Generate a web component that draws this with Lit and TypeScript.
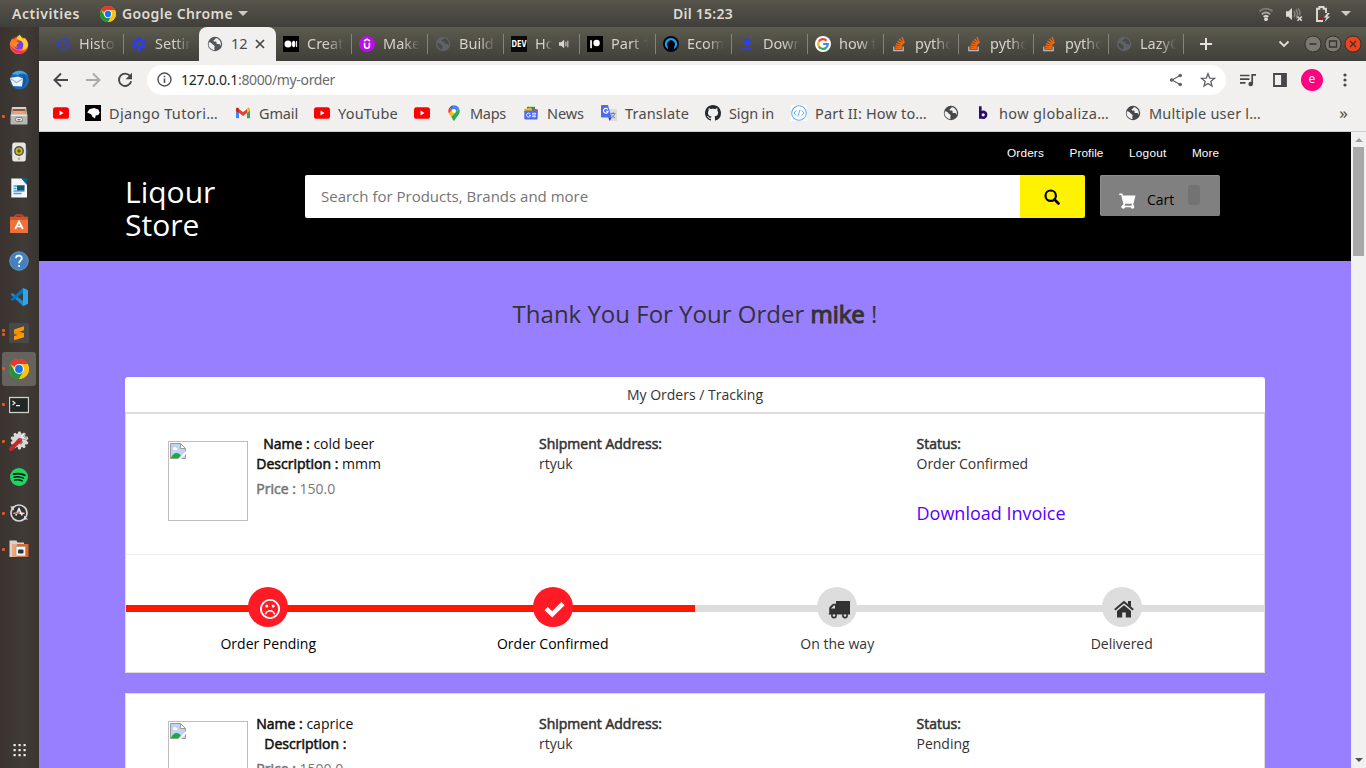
import { LitElement, html, svg, css, nothing } from "lit";
import { customElement } from "lit/decorators.js";

/* ---------- icon drawings ---------- */
const icon = (body: unknown, size = 16, box = "0 0 16 16") =>
  html`<svg class="ic" width=${size} height=${size} viewBox=${box}>${body}</svg>`;

const globeBody = (c: string) => svg`<circle cx="8" cy="8" r="7.2" fill=${c}/>
  <path d="M2.1 6.2c1.8.2 3 1 3.6 2.2.6 1 1.8.7 1.9 1.9.1 1-.5 1.4-.3 2.7.1.6.5 1 .9 1.1-3.400.3-6.600-2.500-6.600-5.800 0-.8.2-1.500.5-2.100z" fill="#f1f0ee"/>
  <path d="M9.400 2.300c-1.500.3-1.200 1.300-2.200 1.700-.9.300-.9 1.200 0 1.500 1.100.4 1.300-.3 2.100.3.700.6-.4 1.600.7 2.100 1.200.5 1.700-.4 2.500.2.700.5.500 1.500 1.300 1.600.7-3.800-1.500-6.700-4.400-7.400z" fill="#f1f0ee"/>`;
const globe = (c = "#45474a") => icon(globeBody(c));
const dimGlobe = icon(svg`<circle cx="8" cy="8" r="7.200" fill="#5f6368"/>
  <path d="M2.300 6.800c2 0 3 .8 3.500 1.600s1.800.7 1.900 1.900c.1 1-.6 1.400-.4 3.200-2.900-.5-5-2.900-5-6.700zM9.400 2.300c-1.500.3-1.200 1.300-2.200 1.700-.9.300-.9 1.200 0 1.500 1.100.4 1.300-.3 2.100.3.700.6-.4 1.600.7 2.100 1.200.5 1.700-.4 2.500.2.700.5.500 1.500 1.300 1.600.7-3.800-1.500-6.700-4.400-7.400z" fill="#4b4b45"/>`);
const chrome = (s: number) => icon(svg`<circle cx="12" cy="12" r="12" fill="#fbc116"/>
  <path d="M12 12 1.600 6A12 12 0 0 1 22.400 6z" fill="#e33b2e"/>
  <path d="M1.600 6A12 12 0 0 0 12 24l5.200-9-5.200-3-5.200 3z" fill="#229342"/>
  <path d="M12 24A12 12 0 0 0 22.400 6H12l5.200 9z" fill="#fbc116"/>
  <path d="M1.600 6A12 12 0 0 1 22.400 6H12v6z" fill="#e33b2e"/>
  <circle cx="12" cy="12" r="5.900" fill="#fff"/><circle cx="12" cy="12" r="4.700" fill="#1a73e8"/>`, s, "0 0 24 24");
const youtube = icon(svg`<rect y="2.200" width="16" height="11.600" rx="2.600" fill="#f00"/><path d="m6.500 5.600 4 2.400-4 2.400z" fill="#fff"/>`);
const history = icon(svg`<g fill="none" stroke="#303fe0" stroke-width="1.400"><path d="M3.200 8.600A5.600 5.600 0 1 1 5 12.400"/><path d="M8.700 4.800v3.600l2.600 1.500"/></g><path d="M.3 7.700h5.800L3.200 10.800z" fill="#303fe0"/>`);
const gear = icon(svg`<g fill="#303fe0"><circle cx="8" cy="8" r="5"/>${[0, 60, 120].map(a => svg`<rect x="6.200" y="1.100" width="3.600" height="13.800" rx=".7" transform=${`rotate(${a} 8 8)`}/>`)}</g><circle cx="8" cy="8" r="2.300" fill="#50504a"/>`);
const medium = icon(svg`<rect width="16" height="16" fill="#000"/><circle cx="5" cy="8" r="3.500" fill="#fff"/><ellipse cx="10.700" cy="8" rx="1.700" ry="3.300" fill="#fff"/><rect x="13.100" y="5" width="1" height="6" fill="#fff"/>`);
const udemy = icon(svg`<circle cx="8" cy="8" r="8" fill="#b80fe8"/><path d="m5 5 3-1.900L11 5M5.600 6.800v3a2.400 2.400 0 0 0 4.800 0v-3" fill="none" stroke="#fff" stroke-width="1.600"/>`);
const devto = icon(svg`<rect width="16" height="16" fill="#0a0a0a"/><text x="8" y="11.200" text-anchor="middle" textLength="15" lengthAdjust="spacingAndGlyphs" font-family="DejaVu Sans" font-weight="700" font-size="8" fill="#fff">DEV</text>`);
const patreon = icon(svg`<rect width="16" height="16" fill="#000"/><rect x="3.200" y="4.200" width="1.700" height="8" fill="#fff"/><circle cx="9.600" cy="7" r="3.200" fill="#fff"/>`);
const ecom = icon(svg`<circle cx="8" cy="8" r="8" fill="#05060b"/><path d="M4.800 13.200a6.100 6.100 0 1 1 6.400 0v-2.600a3.900 3.900 0 1 0-6.400 0z" fill="#12a5f4"/><circle cx="8" cy="7.500" r="2.900" fill="#000"/>`);
const download = icon(svg`<path d="M5.900 2.200h4.200v3.900h2.600L8 10.800 3.300 6.100h2.600zM3.300 12h9.400v1.600H3.300z" fill="#303fe0"/>`);
const google = icon(svg`<circle cx="8" cy="8" r="8" fill="#fff"/><g fill="none" stroke-width="2.200"><path d="M11.500 4.700A4.800 4.800 0 0 0 3.900 5.500" stroke="#ea4335"/><path d="M3.900 5.500a4.800 4.800 0 0 0 0 5" stroke="#fbbc05"/><path d="M3.900 10.500a4.800 4.800 0 0 0 7.300 1.100" stroke="#34a853"/><path d="M11.200 11.600A4.800 4.800 0 0 0 12.800 8H8.200" stroke="#4285f4"/></g>`);
const stack = icon(svg`<path d="M2.800 10.500v4h9.400v-4" fill="none" stroke="#bcbbbb" stroke-width="1.300"/><g stroke="#f4670c" stroke-width="1.400"><path d="M4.300 12.300h6.500M4.400 10.200l6.400.6M5 7.700l6.200 1.700M6.300 5.200l5.500 3.200M8.400 2.900l4.100 4.800M11 1.200l2.300 5.700"/></g>`);
const gmail = icon(svg`<path d="M1 4v9.300h3V7l4 3 4-3v6.300h3V4z" fill="#fff"/><path d="M1 4.500v8.800h3V6.500z" fill="#4285f4"/><path d="M12 6.500v6.800h3V4.500z" fill="#34a853"/><path d="M12 4v4l3-2.300V4c0-1.300-1.600-1.900-2.500-1.100z" fill="#fbbc04"/><path d="M4 8V4l4 3 4-3v4l-4 3z" fill="#ea4335"/><path d="M1 4v1.700L4 8V4l-.5-.9C2.600 2.300 1 2.700 1 4z" fill="#c5221f"/>`);
const djan = icon(svg`<rect width="16" height="16" fill="#000"/><path d="M2.200 7.500 4.500 4.200 9 2.900l4.400 1.700 1.300 3.200-1.500 2.200-2.500.6-.7 3-2.800-2.200-.7-2z" fill="#fff"/>`);
const maps = icon(svg`<path d="M8 .3A5.700 5.700 0 0 0 3.500 2.500L6.200 4.800z" fill="#1a73e8"/><path d="M3.500 2.500a5.700 5.700 0 0 0-.6 6L6.200 5z" fill="#ea4335"/><path d="M2.900 8.500c.6 1.300 1.500 2.300 2.300 3.400l4.600-5.500-3.600-1.600z" fill="#fbbc04"/><path d="M5.200 11.900C6.700 13.700 7 15.700 8 15.700s1.300-2 2.800-3.800c1.400-1.800 2.900-3.500 2.900-6 0-1-.2-1.700-.6-2.500z" fill="#34a853"/><path d="M8 .3c2.200 0 4.100 1.200 5.100 3.100L9.700 7.200 6.200 4.800z" fill="#4285f4"/><circle cx="8" cy="5.900" r="2" fill="#fff"/>`);
const news = icon(svg`<path d="M4 1.800h8v5H4z" fill="#0f9d58"/><path d="m1 4 7-1.400L10 7H2z" fill="#fbbc04"/><path d="m10 3.500 5 1L14.500 8H9z" fill="#ea4335"/><rect x="1.300" y="5.500" width="13.400" height="9" rx="1" fill="#4e6af2"/><path d="M7.300 9A2 2 0 1 0 7.600 10.300H6" fill="none" stroke="#fff" stroke-width="1"/><path d="M9 8.300h4M9 10h4M9 11.700h4" stroke="#fff" stroke-width=".9"/>`);
const translate = icon(svg`<path d="M7 4h9v12H9z" fill="#dcdcdc"/><path d="M9.500 8.500h5M12 7v1.500M10.300 13c2-1.200 3-2.500 3.300-4.500M10.500 9.500c.7 1.700 2 2.700 3.500 3.500" stroke="#6a8a9c" fill="none"/><path d="M0 1c0-.6.400-1 1-1h6l3.500 12.500H1c-.6 0-1-.4-1-1z" fill="#4e6af2"/><path d="M7.300 12.500h3.200L8.700 16z" fill="#1a2cc9"/><path d="M6.800 4.300a2.400 2.400 0 1 0 .4 2H5.100" fill="none" stroke="#fff" stroke-width="1.100"/>`);
const github = icon(svg`<path fill="#24292f" d="M8 0C3.580 0 0 3.580 0 8c0 3.540 2.290 6.530 5.470 7.590.4.070.55-.17.55-.38 0-.19-.01-.82-.01-1.490-2.010.37-2.530-.49-2.690-.94-.09-.23-.48-.94-.82-1.130-.28-.15-.68-.52-.01-.53.63-.01 1.080.58 1.230.82.72 1.210 1.870.87 2.330.66.070-.52.28-.87.51-1.070-1.780-.2-3.640-.89-3.640-3.950 0-.87.31-1.590.82-2.150-.08-.2-.36-1.020.08-2.120 0 0 .67-.21 2.200.82.640-.18 1.320-.27 2-.27s1.360.09 2 .27c1.530-1.040 2.200-.82 2.200-.82.44 1.100.16 1.920.08 2.120.51.56.82 1.270.82 2.150 0 3.070-1.870 3.750-3.650 3.950.29.25.54.73.54 1.480 0 1.070-.01 1.930-.01 2.200 0 .21.15.46.55.38A8.010 8.010 0 0 0 16 8c0-4.420-3.580-8-8-8z"/>`);
const code = icon(svg`<rect width="16" height="16" fill="#fff"/><circle cx="8" cy="8" r="7.300" fill="none" stroke="#62b1f3" stroke-width="1.100"/><path d="M5.200 5.500 3 8l2.200 2.500M10.800 5.500 13 8l-2.200 2.500M9 4.800 7 11.200" fill="none" stroke="#62b1f3"/>`);
const bmark = icon(svg`<path d="M5.300 1.300v12.400M5.300 9.800a2.900 2.900 0 1 0 5.800 0 2.900 2.900 0 1 0-5.800 0" fill="none" stroke="#2b0a6b" stroke-width="2.600"/>`);
const speaker = icon(svg`<path d="M0 5h2.500L6 2v10L2.500 9H0z" fill="#d8d6cf"/><path d="M8 4.500v5M10.300 3.200v7.600" stroke="#d8d6cf" stroke-width="1.200"/>`, 12, "0 0 14 14");

const L = (body: unknown) => icon(body, 20, "0 0 20 20");
const dock = [
  { i: L(svg`<circle cx="10" cy="11" r="8.700" fill="#f4442e"/><path d="M11 .8c.3 2 2 2.500 2.700 4L16 4.300c1.800 2 3.200 4.500 3.200 7A9 9 0 0 1 10 20a9 9 0 0 1-9.200-9C.8 8 2 6 3.300 4.500L4.400 6 7.500 4.500C8.500 3 9.500 1.500 11 .8z" fill="#ff7a21"/><path d="M11 .8c.3 2 2 2.500 2.700 4L16 4.300c1.800 2 3.200 4.500 3.200 7-1 3-3 4.200-5.200 4.700 1-4-1-9-6.500-11.500C8.500 3 9.500 1.500 11 .8z" fill="#ffcf35"/><path d="M1 11c1 5 4 8 9 8.700 4 0 7-2 8.300-4.700-2 2-5 2.500-8 1.500C6 16 3 14 1 11z" fill="#f72d62"/><circle cx="9.800" cy="11" r="4.600" fill="#7540d9"/><path d="M4.400 7.500c3-.8 4.400 0 5.800 1.500L8 10.500c-1 1-.4 2.500 1 3-2.500.5-5-2-4.600-6z" fill="#ff8a1f"/>`) },
  { i: L(svg`<circle cx="10.500" cy="10" r="9.500" fill="#1669b8"/><path d="M3 4C8-1 16 0 19 6c-4-3-7-3-10-1z" fill="#48a4e8"/><path d="M.8 8 9 6.500l5 2-1 8-9-.5z" fill="#eef3f8"/><path d="m1.500 8.500 6 4 6-3.500" fill="none" stroke="#9db6cb" stroke-width="1.100"/><path d="M15 5c3 5 2 10-4 14.500 3-3 4-8 3-12z" fill="#0f559e"/>`) },
  { dots: 1, i: L(svg`<path d="M3 1h14l1 7H2z" fill="#d7d4cf"/><path d="M3.500 3h13v5h-13z" fill="#8d5639"/><path d="M4 5h12v4H4z" fill="#f0a070"/><rect x="1.500" y="8" width="17" height="10.500" rx="1" fill="#b9b7b3"/><rect x="2.200" y="8.600" width="15.600" height="1.200" fill="#eee"/><rect x="6.500" y="11.500" width="7" height="4" rx="1.800" fill="#eee" stroke="#777"/><path d="M8.500 13.700h3" stroke="#555" stroke-width="1.200"/>`) },
  { i: L(svg`<rect x=".8" y="4" width="18.400" height="12" rx="6" fill="#44525f"/><rect x="3.200" y=".5" width="13.600" height="19" rx="2.500" fill="#e6e6e4"/><circle cx="10" cy="9" r="4.900" fill="#4e4e49"/><circle cx="10" cy="9" r="3.500" fill="#cdbb20"/><circle cx="10" cy="9" r="1.700" fill="#5b5520"/><circle cx="10" cy="16.700" r="1.200" fill="#aaa"/>`) },
  { i: L(svg`<path d="M2.300.5H13l5 5.300V19.500H2.300z" fill="#f3f7fa"/><path d="M12 .3h6V7z" fill="#11618c"/><path d="M4.500 8h11M4.500 10.500h3M4.500 13h11M4.500 15.500h8" stroke="#47a4cf" stroke-width="1.400"/><rect x="8" y="7.500" width="7.500" height="5" fill="#1b526c"/>`) },
  { i: L(svg`<path d="M5.500 4c0-4 9-4 9 0" fill="none" stroke="#c2401f" stroke-width="2"/><path d="M1 4h18v15H1z" fill="#f0703a"/><path d="M1 2.700h18V6H1z" fill="#d9512a"/><path d="M6.200 15 10 7.500l3.800 7.500M7 12.500h6" fill="none" stroke="#fff" stroke-width="1.700"/>`) },
  { i: L(svg`<circle cx="10" cy="10" r="9.300" fill="#4481be" stroke="#6f9dc9" stroke-width=".8"/><path d="M7 7.300c.2-3.800 6-3.300 5.800 0-.2 2-2.700 2.200-2.700 5M10.100 14v2" fill="none" stroke="#fff" stroke-width="1.700"/>`) },
  { i: L(svg`<path d="m14 1 5 2.200v13.600L14 19 1.500 7.600l2-1.600L14 14z" fill="#168bd3"/><path d="m14 1-12.500 11.400 2 1.600L14 6z" fill="#0b72bd"/><path d="m14 1 5 2.200v13.600L14 19z" fill="#2ba6ef"/>`) },
  { dots: 2, i: L(svg`<rect width="20" height="20" rx="1" fill="#494949"/><path d="M15 3.300v4L9.500 9 5 10.700V6.600z" fill="#ff9800"/><path d="M5 7.200 15 10v4.100L5 11z" fill="#f08c00"/><path d="M15 10.200v4L5 17.200v-4.100z" fill="#ff9800"/>`) },
  { dots: 1, active: true, i: chrome(20) },
  { dots: 1, i: L(svg`<rect x=".5" y="2.500" width="19" height="15" fill="#222625" stroke="#cfcfca" stroke-width="1.300"/><path d="m3.500 6 2.500 2-2.500 2M7 10.700h4" fill="none" stroke="#e9e9e9" stroke-width="1.200"/>`) },
  { dots: 1, i: L(svg`<g fill="#d9d9d7"><circle cx="10.500" cy="9.500" r="7.200"/>${[0, 36, 72, 108, 144].map(a => svg`<rect x="9" y=".5" width="3" height="18" rx="1" transform=${`rotate(${a} 10.500 9.500)`}/>`)}</g><path d="m8.500 8.500 4.500 4" stroke="#777" stroke-width="3.500"/><path d="m2 18 9-9" stroke="#c8242b" stroke-width="4" stroke-linecap="round"/><path d="M10.500 9.500 13 7M12 4c1-2 3-2.500 4.500-1.500L14.500 5l1 1.500 2.500-1c0 2.500-2.500 3.500-5 2.500" fill="#f2f2f2" stroke="#888" stroke-width=".8"/>`) },
  { dots: 1, none: true, i: L(svg`<circle cx="10" cy="10" r="9" fill="#1ed760"/><g fill="none" stroke="#111" stroke-linecap="round"><path d="M4.600 7.200c4-1.100 8-.7 11.200 1" stroke-width="1.800"/><path d="M5 10.300c3.500-1 6.800-.5 9.500.9" stroke-width="1.500"/><path d="M5.500 13.100c3-.7 5.500-.4 7.900.9" stroke-width="1.300"/></g>`) },
  { dots: 1, i: L(svg`<circle cx="10" cy="10" r="8" fill="#333" stroke="#d8d8d6" stroke-width="1.700"/><path d="m6.800 12.500 3.200-6.700 3.200 6.700" fill="none" stroke="#eee" stroke-width="1.700"/><path d="M4.500 10.300h11" stroke="#e9e9e9" stroke-width="1.400"/><path d="M5.500 10.300h5" stroke="#e95420" stroke-width="1.400"/><path d="M1 3.500h4v4zM19 16.500h-4v-4z" fill="#ddd"/>`) },
  { dots: 1, i: L(svg`<path d="M.5 1.500h7l1 2H15V18H.5z" fill="#d8d3cf"/><path d="M3 5h16.500v13H3z" fill="#df672f"/><path d="M3 5h5v13H3z" fill="#f0a57c"/><rect x="7" y="7.500" width="9.500" height="9.500" fill="#f4f4f4" stroke="#999" stroke-width=".7"/><rect x="9" y="10.500" width="5.500" height="4" rx="1" fill="#333"/>`) },
] as { i: unknown; dots?: number; active?: boolean; none?: boolean }[];

/* ---------- data ---------- */
const tabs: { t: string; i: unknown; kind?: string; w?: number }[] = [
  { t: "History", i: history }, { t: "Settings", i: gear, w: 75 }, { t: "12", i: globe("#54565b"), kind: "on", w: 77 },
  { t: "Create", i: medium }, { t: "Make", i: udemy }, { t: "Build a", i: dimGlobe }, { t: "How", i: devto, kind: "audio" },
  { t: "Part 1", i: patreon }, { t: "Ecomm", i: ecom }, { t: "Downlo", i: download }, { t: "how to", i: google },
  { t: "python", i: stack, w: 75 }, { t: "python", i: stack, w: 75 }, { t: "python", i: stack, w: 75 }, { t: "LazyC", i: dimGlobe, w: 75 },
];
/* cell: full width of a bookmark; w: label width */
const marks = [
  { i: youtube, t: "", cell: 32, w: 0 },
  { i: djan, t: "Django Tutori…", cell: 150, w: 109 },
  { i: gmail, t: "Gmail", cell: 79, w: 39 },
  { i: youtube, t: "YouTube", cell: 100, w: 60 },
  { i: youtube, t: "", cell: 32, w: 0 },
  { i: maps, t: "Maps", cell: 77, w: 36 },
  { i: news, t: "News", cell: 78, w: 37 },
  { i: translate, t: "Translate", cell: 104, w: 64 },
  { i: github, t: "Sign in", cell: 86, w: 45 },
  { i: code, t: "Part II: How to…", cell: 152, w: 112 },
  { i: globe(), t: "", cell: 32, w: 0 },
  { i: bmark, t: "how globaliza…", cell: 150, w: 110 },
  { i: globe(), t: "Multiple user l…", cell: 160, w: 112 },
];
const orders = [
  { name: "cold beer", desc: "mmm", price: "150.0", status: "Order Confirmed", invoice: true, nameIn: 7, descIn: 0 },
  { name: "caprice", desc: "", price: "1500.0", status: "Pending", invoice: false, nameIn: 0, descIn: 8 },
];
const steps = [
  { t: "Order Pending", on: true, i: html`<svg width="20" height="20" viewBox="0 0 20 20"><circle cx="10" cy="10" r="9.100" fill="none" stroke="currentColor" stroke-width="1.900"/><circle cx="6.800" cy="7" r="1.500" fill="currentColor"/><circle cx="13.200" cy="7" r="1.500" fill="currentColor"/><path d="M5.600 14.700c1.600-4 7.200-4 8.800 0" fill="none" stroke="currentColor" stroke-width="1.600" stroke-linecap="round"/></svg>` },
  { t: "Order Confirmed", on: true, i: html`<svg width="21" height="17" viewBox="0 0 21 17"><path d="m2.200 7.700 6 5.700L19 2.700" fill="none" stroke="currentColor" stroke-width="4.600"/></svg>` },
  { t: "On the way", on: false, i: html`<svg width="22" height="19" viewBox="0 0 22 19"><path d="M8 1h14v13.500H1.200c-.9 0-.9-1.200 0-1.300V8.500c0-1 .3-1.500.9-2.100l2-2c.5-.5 1-.7 1.800-.7H8z" fill="currentColor"/><path d="M3 8.500 5.800 5.600H7v3z" fill="#ddd"/><circle cx="6" cy="15.500" r="2.900" fill="currentColor"/><circle cx="6" cy="15.500" r="1.300" fill="#ddd"/><circle cx="17" cy="15.500" r="2.900" fill="currentColor"/><circle cx="17" cy="15.500" r="1.300" fill="#ddd"/></svg>` },
  { t: "Delivered", on: false, i: html`<svg width="20" height="18" viewBox="0 0 20 18"><path d="M10 5.300 17 11v6.500h-5.200v-5H8.200v5H3V11z" fill="currentColor"/><path d="M.8 9.700 10 2.100l9.200 7.600" fill="none" stroke="currentColor" stroke-width="2"/><path d="M14 1h3v6l-3-2.500z" fill="currentColor"/></svg>` },
];
const broken = html`<svg width="16" height="16" viewBox="0 0 16 16"><path d="M.5.500h10l5 5v10H.5z" fill="#c3d1f5" stroke="#9a9a9a"/><path d="M3 6c0-2 3-2.600 3.500-1C8 5 8 7 6.500 7H3.500z" fill="#fff"/><path d="M1 15c2-5 7-7 10-2l-2 2z" fill="#11b23b"/><path d="M10.500.5v5h5z" fill="#fff" stroke="#9a9a9a"/><path d="m8 16 8-8v3l-5 5z" fill="#fff"/></svg>`;

@customElement("app-root")
export class AppRoot extends LitElement {
  static styles = css`
    :host { display: block; width: 1366px; height: 768px; overflow: hidden; font-family: "Open Sans", "Noto Sans", sans-serif; font-size: 14px; line-height: 20px; color: #333; }
    * { box-sizing: border-box; }
    svg { display: block; flex: none; }
    .desk { display: grid; grid-template: 27px 741px / 39px 1327px; height: 768px; }
    .fit { white-space: pre; }

    .top { grid-column: 1 / 3; display: grid; grid-template-columns: 673px auto 1fr; align-items: center; background: linear-gradient(#56544b, #403f3a); color: #dfdbd2; font: 600 14px/26px "Noto Sans", sans-serif; }
    .top-l { display: flex; align-items: center; padding-left: 12px; }
    .top-l .ic { margin: 0 6px 0 20px; }
    .caret { border: 5px solid transparent; border-top-color: #cfcbc3; border-bottom: 0; margin-left: 5px; }
    .top-r { display: flex; justify-content: flex-end; align-items: center; padding-right: 15px; }

    .dock { background: linear-gradient(90deg, #3a332f, #403b36 60%, #393430); display: flex; flex-direction: column; align-items: center; padding-right: 1px; }
    .app { width: 38px; height: 34px; margin-bottom: 2.100px; display: flex; align-items: center; justify-content: center; position: relative; }
    .app.on { background: #66635f; border-radius: 3px; width: 34px; }
    .pips { position: absolute; left: 2px; top: 0; bottom: 0; display: flex; flex-direction: column; justify-content: center; gap: 1px; }
    .app.on .pips { left: 0; }
    .pips i { width: 3px; height: 3px; border-radius: 1px; background: #e95420; }
    .grid9 { margin-top: auto; padding: 0 0 11px; }

    .win { display: grid; grid-template-rows: 34px 37px 34px 636px; background: #f1f0ee; font-family: "Noto Sans", sans-serif; overflow: hidden; }
    .tabs { display: flex; background: linear-gradient(#5c5b4f, #403f3a); padding-left: 9px; color: #d5d2ca; font-size: 14.500px; }
    .tab { width: 76px; display: flex; align-items: center; padding: 0 8px 0 7px; position: relative; }
    .tab::after { content: ""; position: absolute; right: 0; top: 7px; height: 20px; width: 1px; background: #84827a; }
    .tab .lab { margin-left: 8px; flex: 1; overflow: hidden; white-space: nowrap; padding-bottom: 2px; -webkit-mask-image: linear-gradient(90deg, #000 55%, transparent); mask-image: linear-gradient(90deg, #000 55%, transparent); }
    .tab.on { background: #f1f0ee; border-radius: 8px 8px 0 0; color: #4a4a4a; padding: 0 11px 0 8px; }
    .tab.on::after, .tab.pre::after { display: none; }
    .tab.on .lab { -webkit-mask-image: none; mask-image: none; }
    .tab.audio .lab { flex: 0 0 17px; margin-right: 7px; }
    .plus { margin: 10px 0 0 15px; }
    .wm { margin-left: auto; display: flex; align-items: center; padding-right: 4px; }

    .bar { display: flex; align-items: center; padding-left: 14px; }
    .omni { width: 1079px; height: 30px; background: #fff; border-radius: 15px; display: flex; align-items: center; padding: 0 10px; font: 14px/30px "Noto Sans", sans-serif; color: #6b6b6b; }
    .omni .u { margin-left: 9px; flex: 1; }
    .host { color: #222; }
    .me { width: 22px; height: 22px; border-radius: 50%; background: #ff007f; color: #fff; font-size: 12px; line-height: 20px; text-align: center; }
    .marks { display: flex; align-items: center; padding: 0 0 4px 14px; border-bottom: 1px solid #cfcecc; font-size: 14.500px; color: #4b4b4b; }
    .mark { display: flex; align-items: center; gap: 8px; }
    .more { margin-left: auto; padding-right: 18px; font-size: 17px; line-height: 16px; }

    .view { display: grid; grid-template-columns: 1312px 15px; font-family: "Open Sans", sans-serif; }
    .page { background: #977fff; height: 636px; overflow: hidden; }
    .sb { background: #f1f1f1; display: flex; flex-direction: column; align-items: center; }
    .thumb { width: 11px; height: 109px; background: #a8a8a8; }
    .tri { border: 4px solid transparent; border-bottom: 4px solid #9c9c9c; border-top: 0; margin: 6px 0 5px; }
    .tri.dn { border-top: 4px solid #505050; border-bottom: 0; margin: auto 0 6px; }

    .head { background: #000; height: 129px; padding: 13px 131px 0 86px; color: #fff; }
    .links { display: flex; justify-content: flex-end; padding-right: 1px; gap: 25.500px; font: 11.800px/16px "Liberation Sans", sans-serif; }
    .row { display: flex; margin-top: 14px; }
    .brand { width: 180px; font-size: 30px; line-height: 33px; margin: 0; font-weight: 400; }
    .find { width: 715px; height: 43px; background: #fff; border-radius: 2px 0 0 2px; padding-left: 16px; font-size: 15px; line-height: 43px; color: #757575; }
    .go { width: 65px; height: 43px; background: #fff200; border-radius: 0 2px 2px 0; display: grid; place-items: center; padding-right: 1px; }
    .cart { width: 120px; height: 41px; margin-left: 15px; background: #808080; border: 1px solid #8e8e8e; border-right-color: #808080; border-bottom-color: #808080; border-radius: 2px; display: flex; color: #000; padding: 17px 0 0 18px; }
    .cart span { margin: -3px 0 0 11px; }
    .badge { width: 12px; height: 20px; background: #737373; border-radius: 3px; margin: -8px 0 0 14px; }

    .thanks { text-align: center; font-size: 24px; line-height: 26px; padding-top: 40px; height: 116px; margin: 0; font-weight: 400; }
    .fb { -webkit-text-stroke: .55px currentColor; }
    .thanks .fb { -webkit-text-stroke-width: 1.100px; }
    .list { width: 1140px; margin: 0 auto; }
    .cap { height: 36px; background: #fff; border-bottom: 1px solid #ddd; border-radius: 3px 3px 0 0; text-align: center; line-height: 35px; }
    .card { height: 260px; background: #fff; border: 1px solid #ddd; margin-bottom: 20px; }
    .info { height: 141px; border-bottom: 1px solid #eee; padding: 20px 0 0 42px; display: flex; }
    .pic { width: 80px; height: 80px; border: 1px solid #bdbdbd; padding: 1px; margin: 7px 8px 0 0; }
    .prod { width: 283px; padding-left: .3px; color: #111; }
    .price { color: #777; margin-top: 5px; }
    .addr { width: 377.500px; }
    .inv { margin-top: 29px; font-size: 18px; color: #5a00ff; }
    .track { display: grid; grid-template-columns: repeat(4, 1fr); padding-top: 32px; background: linear-gradient(90deg, #ff1800 50%, #ddd 50%) 0 50px / 100% 7px no-repeat; }
    .step { display: flex; flex-direction: column; align-items: center; gap: 7px; color: #333; }
    .step.on { color: #000; }
    .dot { width: 40px; height: 40px; border-radius: 50%; background: #ddd; display: grid; place-items: center; padding: 4px 0 0 4px; color: #333; }
    .on .dot { background: #ff1a25; color: #fff; }
  `;

  /* Spreads each measured label over its nominal width. */
  protected firstUpdated() {
    this.renderRoot.querySelectorAll<HTMLElement>("[data-w]").forEach(el => {
      const want = Number(el.dataset.w);
      const n = (el.textContent ?? "").length;
      const have = el.getBoundingClientRect().width;
      if (n && want) el.style.letterSpacing = `${(want - have) / n}px`;
    });
  }

  private fit(t: string, w: number, cls = "") {
    return html`<span class="fit ${cls}" data-w=${w}>${t}</span>`;
  }

  private topBar() {
    return html`<div class="top">
      <div class="top-l">${this.fit("Activities", 68)}${chrome(16)}${this.fit("Google Chrome", 111)}<i class="caret"></i></div>
      ${this.fit("Dil 15:23", 60)}
      <div class="top-r">
        <svg width="16" height="16" viewBox="0 0 16 16"><g fill="none" stroke-width="1.800"><path d="M1.500 5.300c4-3.300 9-3.300 13 0" stroke="#7f7d76"/><path d="M3.800 8.200c2.700-2.200 5.700-2.200 8.400 0" stroke="#aaa7a0"/><path d="M5.600 10.700c1.600-1.200 3.200-1.200 4.800 0" stroke="#dfdbd2"/></g><circle cx="8" cy="13.200" r="1.900" fill="#dfdbd2"/></svg>
        <svg style="margin-left:11px" width="18" height="16" viewBox="0 0 18 16"><path d="M1 5.200h2.500L7 2v12l-3.500-3.300H1z" fill="#dfdbd2"/><path d="M9 5c1.300 2 1.300 4 0 6M11 3.500c2 3 2 6 0 9M13.300 2.300c1.700 2.500 1.900 5 1.500 7" fill="none" stroke="#8a8780" stroke-width="1.400"/><path d="m12.500 10.500 4.300 4.300m0-4.300-4.300 4.300" stroke="#dfdbd2" stroke-width="1.600"/></svg>
        <svg style="margin-left:12px" width="16" height="18" viewBox="0 0 16 18"><path d="M8 16H2V3.800h2.400V2h4.200v1.800H11V8" fill="none" stroke="#dfdbd2" stroke-width="1.900"/><path d="M4 12.500h3.500v2H4z" fill="#d00"/><path d="M12.500 8 8.800 12.500h2.700L9.500 17l5.500-5.500h-2.800l2.600-3.500z" fill="#dfdbd2"/></svg>
        <i class="caret" style="margin-left:10px"></i>
      </div>
    </div>`;
  }

  private dockBar() {
    return html`<div class="dock">${dock.map(a => html`<div class="app ${a.active ? "on" : ""}">
        ${a.dots && !a.none ? html`<span class="pips"><i></i>${a.dots > 1 ? html`<i></i>` : nothing}</span>` : nothing}${a.i}</div>`)}
      <svg class="grid9" width="13" height="24" viewBox="0 0 13 13">${[0, 5, 10].map(x => [0, 5, 10].map(y => svg`<rect x=${x + 0.5} y=${y} width="2.200" height="2.200" fill="#eee"/>`))}</svg>
    </div>`;
  }

  private chromeBars() {
    return html`
      <div class="tabs">
        ${tabs.map((t, k) => html`<div class="tab ${t.kind ?? ""} ${k === 1 ? "pre" : ""}" style="width:${t.w ?? 76}px">${t.i}<span class="lab">${t.t}</span>${t.kind === "on"
          ? html`<svg width="10" height="10" viewBox="0 0 10 10"><path d="m1 1 8 8M9 1 1 9" stroke="#444" stroke-width="1.700"/></svg>`
          : t.kind === "audio" ? speaker : nothing}</div>`)}
        <svg class="plus" width="14" height="14" viewBox="0 0 14 14"><path d="M7 1v12M1 7h12" stroke="#e6e3dc" stroke-width="2"/></svg>
        <div class="wm">
          <svg width="12" height="8" viewBox="0 0 12 8"><path d="m1.500 1.500 4.500 4.500 4.500-4.500" fill="none" stroke="#e0ddd6" stroke-width="1.900"/></svg>
          <svg style="margin-left:14px" width="58" height="18" viewBox="0 0 58 18"><g stroke="#33322e"><circle cx="9" cy="9" r="8" fill="#7b7971"/><circle cx="29" cy="9" r="8" fill="#7b7971"/><circle cx="49" cy="9" r="8" fill="#f1421b"/></g><path d="M5.500 9h7M25.500 6h7v6h-7zM46 6l6 6m0-6-6 6" fill="none" stroke="#35342f" stroke-width="1.300"/></svg>
        </div>
      </div>
      <div class="bar">
        <svg width="16" height="16" viewBox="0 0 16 16"><path d="M15 8H2M8 1.500 1.500 8 8 14.500" fill="none" stroke="#45474a" stroke-width="1.900"/></svg>
        <svg style="margin-left:16px" width="16" height="16" viewBox="0 0 16 16"><path d="M1 8h13M8 1.500 14.500 8 8 14.500" fill="none" stroke="#aaa9a7" stroke-width="1.900"/></svg>
        <svg style="margin:0 14px 0 16px" width="16" height="16" viewBox="0 0 16 16"><path d="M13.300 4.300A6.200 6.200 0 1 0 14.200 9.300" fill="none" stroke="#45474a" stroke-width="1.900"/><path d="M15 .8v6.400H8.600z" fill="#45474a"/></svg>
        <div class="omni">
          <svg width="15" height="15" viewBox="0 0 15 15"><circle cx="7.500" cy="7.500" r="6.500" fill="none" stroke="#505255" stroke-width="1.400"/><path d="M7.500 6.500V11M7.500 3.800v1.500" stroke="#505255" stroke-width="1.600"/></svg>
          <span class="u">${this.fit("127.0.0.1", 57, "host")}${this.fit(":8000/my-order", 97)}</span>
          <svg width="14" height="14" viewBox="0 0 14 14"><path d="M11.200 2.500 3 7l8.200 4.500" fill="none" stroke="#5f6063" stroke-width="1.200"/><g fill="#5f6063"><circle cx="11.200" cy="2.500" r="1.800"/><circle cx="2.600" cy="7" r="1.800"/><circle cx="11.200" cy="11.500" r="1.800"/></g></svg>
          <svg style="margin-left:17px" width="16" height="16" viewBox="0 0 16 16"><path d="m8 1.700 1.700 4.400 4.700.3-3.600 3 1.200 4.700L8 11.500l-4 2.600 1.200-4.700-3.600-3 4.700-.3z" fill="none" stroke="#5f6063" stroke-width="1.300"/></svg>
        </div>
        <svg style="margin-left:13px" width="17" height="14" viewBox="0 0 17 14"><path d="M1 2.500h9.500M1 6.200h9.500M1 9.900h5.500M13.200 11V1.900H17" fill="none" stroke="#45474a" stroke-width="1.700"/><circle cx="11.700" cy="11" r="2.300" fill="#45474a"/></svg>
        <svg style="margin-left:17px" width="14" height="14" viewBox="0 0 14 14"><path d="M1 1h12v12H1zM9 1h4v12H9z" fill="none" stroke="#45474a" stroke-width="1.800"/><path d="M9 1h4v12H9z" fill="#45474a"/></svg>
        <div class="me" style="margin-left:14px">e</div>
        <svg style="margin-left:20px" width="4" height="14" viewBox="0 0 4 14"><g fill="#45474a"><circle cx="2" cy="2" r="1.600"/><circle cx="2" cy="7" r="1.600"/><circle cx="2" cy="12" r="1.600"/></g></svg>
      </div>
      <div class="marks">${marks.map(m => html`<div class="mark" style="width:${m.cell}px">${m.i}${m.t ? this.fit(m.t, m.w) : nothing}</div>`)}<span class="more">»</span></div>`;
  }

  private card(o: (typeof orders)[0]) {
    return html`<div class="card">
      <div class="info">
        <div class="pic">${broken}</div>
        <div class="prod">
          <div style="padding-left:${o.nameIn}px"><span class="fb">Name :</span> ${o.name}</div>
          <div style="padding-left:${o.descIn}px"><span class="fb">Description :</span> ${o.desc}</div>
          <div class="price"><span class="fb">Price :</span> ${o.price}</div>
        </div>
        <div class="addr"><div class="fb">Shipment Address:</div>rtyuk</div>
        <div><div class="fb">Status:</div>${o.status}${o.invoice ? html`<div class="inv">Download Invoice</div>` : nothing}</div>
      </div>
      <div class="track">${steps.map(s => html`<div class="step ${s.on ? "on" : ""}"><div class="dot">${s.i}</div><span>${s.t}</span></div>`)}</div>
    </div>`;
  }

  render() {
    return html`<div class="desk">
      ${this.topBar()}${this.dockBar()}
      <div class="win">${this.chromeBars()}
        <div class="view">
          <div class="page">
            <div class="head">
              <div class="links">${this.fit("Orders", 37)}${this.fit("Profile", 34)}${this.fit("Logout", 37.5)}${this.fit("More", 27)}</div>
              <div class="row">
                <h1 class="brand">Liqour<br>Store</h1>
                <div class="find">Search for Products, Brands and more</div>
                <div class="go"><svg width="16" height="16" viewBox="0 0 16 16"><circle cx="6.700" cy="6.700" r="5.200" fill="none" stroke="#000" stroke-width="2.200"/><path d="m10.500 10.500 4 4" stroke="#000" stroke-width="2.600" stroke-linecap="round"/></svg></div>
                <div class="cart"><svg width="17" height="16" viewBox="0 0 17 16"><path d="M.8 1.300h2L5.300 11.300 3.500 13.500h10.700l-.7-2.200" fill="none" stroke="#fff" stroke-width="1.600" stroke-linecap="round"/><path d="M3 2.500h13.500L14.500 10.700H5z" fill="#fff"/><circle cx="4.300" cy="14" r="1.800" fill="#fff"/><circle cx="13.500" cy="14" r="1.800" fill="#fff"/></svg><span>Cart</span><i class="badge"></i></div>
              </div>
            </div>
            <h2 class="thanks">Thank You For Your Order <span class="fb">mike</span> !</h2>
            <div class="list">
              <div class="cap">My Orders / Tracking</div>
              ${orders.map(o => this.card(o))}
            </div>
          </div>
          <div class="sb"><i class="tri"></i><i class="thumb"></i><i class="tri dn"></i></div>
        </div>
      </div>
    </div>`;
  }
}
